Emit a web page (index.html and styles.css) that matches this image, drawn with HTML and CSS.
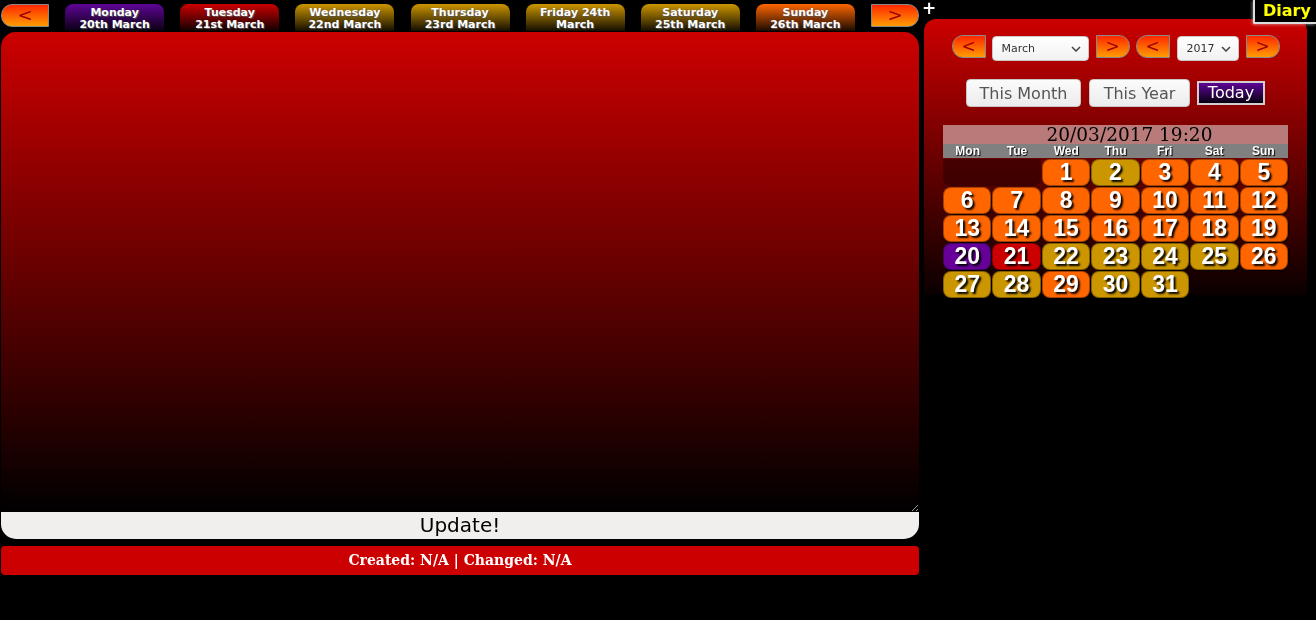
FILE: index.html
```html
<!DOCTYPE html>
<html>
<head>
<meta charset="utf-8">
<title>Diary</title>
<link rel="stylesheet" href="styles.css">
</head>
<body>
<div class="page">
  <div class="main">
    <div class="daybar">
      <button class="nav nav-prev">&lt;</button>
      <div class="tab tab-purple">Monday<br>20th March</div>
      <div class="tab tab-red">Tuesday<br>21st March</div>
      <div class="tab tab-gold">Wednesday<br>22nd March</div>
      <div class="tab tab-gold">Thursday<br>23rd March</div>
      <div class="tab tab-gold">Friday 24th<br>March</div>
      <div class="tab tab-gold">Saturday<br>25th March</div>
      <div class="tab tab-orange">Sunday<br>26th March</div>
      <button class="nav nav-next">&gt;</button>
    </div>
    <textarea class="entry" autofocus></textarea>
    <button class="update">Update!</button>
    <div class="meta">Created: N/A | Changed: N/A</div>
  </div>
  <div class="side">
    <div class="plus">+</div>
    <div class="panel">
      <div class="picker">
        <button class="nav nav-prev small">&lt;</button>
        <span class="selwrap sel-month">
          <select class="sel"><option>March</option></select>
          <svg class="chev" width="10" height="6" viewBox="0 0 10 6"><path d="M1 1 L5 5 L9 1" fill="none" stroke="#444" stroke-width="1.5"/></svg>
        </span>
        <button class="nav nav-next small">&gt;</button>
        <button class="nav nav-prev small">&lt;</button>
        <span class="selwrap sel-year">
          <select class="sel"><option>2017</option></select>
          <svg class="chev" width="10" height="6" viewBox="0 0 10 6"><path d="M1 1 L5 5 L9 1" fill="none" stroke="#444" stroke-width="1.5"/></svg>
        </span>
        <button class="nav nav-next small">&gt;</button>
      </div>
      <div class="quick">
        <button class="qbtn qbtn-month">This Month</button>
        <button class="qbtn qbtn-year">This Year</button>
        <button class="today">Today</button>
      </div>
      <div class="cal">
        <div class="cal-head">20/03/2017 19:20</div>
        <div class="cal-days">
          <span>Mon</span><span>Tue</span><span>Wed</span><span>Thu</span><span>Fri</span><span>Sat</span><span>Sun</span>
        </div>
        <div class="cal-grid">
          <div class="blank"></div>
          <div class="d o">1</div><div class="d g">2</div><div class="d o">3</div><div class="d o">4</div><div class="d o">5</div>
          <div class="d o">6</div><div class="d o">7</div><div class="d o">8</div><div class="d o">9</div><div class="d o">10</div><div class="d o">11</div><div class="d o">12</div>
          <div class="d o">13</div><div class="d o">14</div><div class="d o">15</div><div class="d o">16</div><div class="d o">17</div><div class="d o">18</div><div class="d o">19</div>
          <div class="d p">20</div><div class="d r">21</div><div class="d g">22</div><div class="d g">23</div><div class="d g">24</div><div class="d g">25</div><div class="d o">26</div>
          <div class="d g">27</div><div class="d g">28</div><div class="d o">29</div><div class="d g">30</div><div class="d g">31</div>
        </div>
      </div>
    </div>
  </div>
  <div class="diary">Diary</div>
</div>
</body>
</html>
```

FILE: styles.css
```css
html, body {
  margin: 0;
  padding: 0;
  background: #000;
}
body {
  font-family: "DejaVu Sans", sans-serif;
  width: 1316px;
  height: 620px;
  overflow: hidden;
}
.page {
  position: relative;
  display: flex;
  align-items: flex-start;
}
.main {
  width: 918px;
  margin-left: 1px;
  display: flex;
  flex-direction: column;
}
.daybar {
  height: 32px;
  display: flex;
  justify-content: space-between;
  align-items: flex-start;
  padding-top: 4px;
  box-sizing: border-box;
}
.nav {
  width: 48px;
  height: 23px;
  padding: 0 0 2px;
  border: 1px solid #8a8a8a;
  background: linear-gradient(#ff2800, #ff9c00);
  color: #a00000;
  font-family: "DejaVu Sans", sans-serif;
  font-size: 18px;
  line-height: 18px;
  cursor: pointer;
}
.nav-prev { border-radius: 11px 0 0 11px; }
.nav-next { border-radius: 0 11px 11px 0; }
.tab {
  width: 99px;
  height: 27px;
  box-sizing: border-box;
  padding-top: 3px;
  border-radius: 8px 8px 0 0;
  color: #fff;
  font-weight: bold;
  font-size: 11px;
  line-height: 12px;
  text-align: center;
  text-shadow: 1px 1px 1px #555;
}
.tab-purple { background: linear-gradient(#5e0596, #0a0010); }
.tab-red { background: linear-gradient(#cc0000, #100000); }
.tab-gold { background: linear-gradient(#cc9600, #140e00); }
.tab-orange { background: linear-gradient(#ff6600, #1a0a00); }
.entry {
  display: block;
  width: 918px;
  height: 480px;
  box-sizing: border-box;
  margin: 0;
  padding: 8px 6px;
  border: none;
  outline: none;
  border-radius: 15px 15px 0 0;
  background: linear-gradient(#cc0000, #000);
  color: #fff;
  caret-color: #fff;
  font-family: "DejaVu Sans", sans-serif;
  font-size: 16px;
  line-height: 20px;
}
.update {
  display: block;
  width: 918px;
  height: 27px;
  margin: 0;
  padding: 0;
  border: none;
  border-radius: 0 0 15px 15px;
  background: #f0efee;
  color: #000;
  font-family: "DejaVu Sans", sans-serif;
  font-size: 20px;
  line-height: 27px;
}
.meta {
  margin-top: 7px;
  height: 29px;
  border-radius: 4px;
  background: #cc0000;
  color: #fff;
  font-family: "DejaVu Serif", serif;
  font-weight: bold;
  font-size: 14px;
  line-height: 29px;
  text-align: center;
}
.side {
  margin-left: 3px;
  display: flex;
  flex-direction: column;
}
.plus {
  height: 19px;
  color: #fff;
  font-weight: bold;
  font-size: 17px;
  line-height: 17px;
}
.panel {
  margin-left: 2px;
  width: 383px;
  height: 276px;
  box-sizing: border-box;
  padding-top: 16px;
  border-radius: 12px 12px 0 0;
  background: linear-gradient(#cc0000, #0a0000);
  display: flex;
  flex-direction: column;
  align-items: center;
}
.picker {
  display: flex;
  align-items: flex-start;
  gap: 6px;
  height: 26px;
}
.nav.small {
  width: 34px;
  height: 23px;
  font-size: 17px;
}
.selwrap {
  position: relative;
  display: block;
  height: 25px;
  margin-top: 1px;
}
.sel {
  -webkit-appearance: none;
  appearance: none;
  width: 100%;
  height: 25px;
  margin: 0;
  border: 1px solid #c8c8c8;
  border-radius: 4px;
  background: linear-gradient(#ffffff, #f1f1f1);
  color: #333;
  font-family: "DejaVu Sans", sans-serif;
  font-size: 11px;
  padding: 0 0 0 9px;
}
.chev {
  position: absolute;
  right: 8px;
  top: 10px;
}
.sel-month { width: 97px; margin-right: 1px; }
.sel-year { width: 62px; margin-left: 1px; margin-right: 1px; }
.sel-year .sel { padding-left: 9px; }
.quick {
  margin-top: 18px;
  display: flex;
  align-items: center;
  gap: 7px;
  height: 28px;
}
.qbtn {
  height: 28px;
  padding: 0;
  white-space: nowrap;
  border: 1px solid #c6c6c6;
  border-radius: 4px;
  background: linear-gradient(#fbfbfb, #ececec);
  color: #555;
  font-family: "DejaVu Sans", sans-serif;
  font-size: 16px;
}
.qbtn-month { width: 115px; margin-right: 1px; }
.qbtn-year { width: 101px; }
.today {
  width: 68px;
  height: 24px;
  padding: 0;
  border: 2px solid #cfcfcf;
  background: linear-gradient(#5e0596, #080010);
  color: #fff;
  font-family: "DejaVu Sans", sans-serif;
  font-size: 16px;
  line-height: 20px;
}
.cal {
  margin-top: 18px;
  width: 345px;
}
.cal-head {
  height: 19px;
  box-sizing: border-box;
  padding-left: 28px;
  background: #b97a7a;
  color: #000;
  font-family: "DejaVu Serif", serif;
  font-size: 18.5px;
  line-height: 19px;
  text-align: center;
  white-space: nowrap;
}
.cal-days {
  height: 14px;
  background: #808080;
  display: grid;
  grid-template-columns: repeat(7, 1fr);
  color: #fff;
  font-family: "Liberation Sans", Arial, sans-serif;
  font-weight: bold;
  font-size: 12px;
  line-height: 15px;
  text-align: center;
  text-shadow: 1px 1px 1px #000;
}
.cal-grid {
  margin-top: 1px;
  display: grid;
  grid-template-columns: repeat(7, 1fr);
  grid-auto-rows: 27px;
  gap: 1px 1px;
}
.blank {
  grid-column: span 2;
  background: rgba(40, 0, 0, 0.55);
  border-radius: 0 0 8px 8px;
}
.d {
  border-radius: 8px;
  box-sizing: border-box;
  border: 1px solid rgba(0, 0, 0, 0.35);
  box-shadow: 1px 1px 1px rgba(0, 0, 0, 0.7);
  color: #fff;
  font-family: "Liberation Sans", Arial, sans-serif;
  font-weight: bold;
  font-size: 23px;
  line-height: 25px;
  text-align: center;
  text-shadow: 2px 2px 2px #000;
}
.o { background: #ff6600; }
.g { background: #cc9600; }
.p { background: #660099; }
.r { background: #cc0000; }
.diary {
  position: absolute;
  top: 0;
  right: 0;
  width: 63px;
  height: 24px;
  box-sizing: border-box;
  padding-left: 8px;
  border-left: 2px solid #ddd;
  border-bottom: 2px solid #ddd;
  border-bottom-left-radius: 2px;
  box-shadow: -1px 1px 3px rgba(255, 255, 255, 0.4);
  background: #000;
  color: #ffff00;
  font-weight: bold;
  font-size: 16px;
  line-height: 22px;
}
```
